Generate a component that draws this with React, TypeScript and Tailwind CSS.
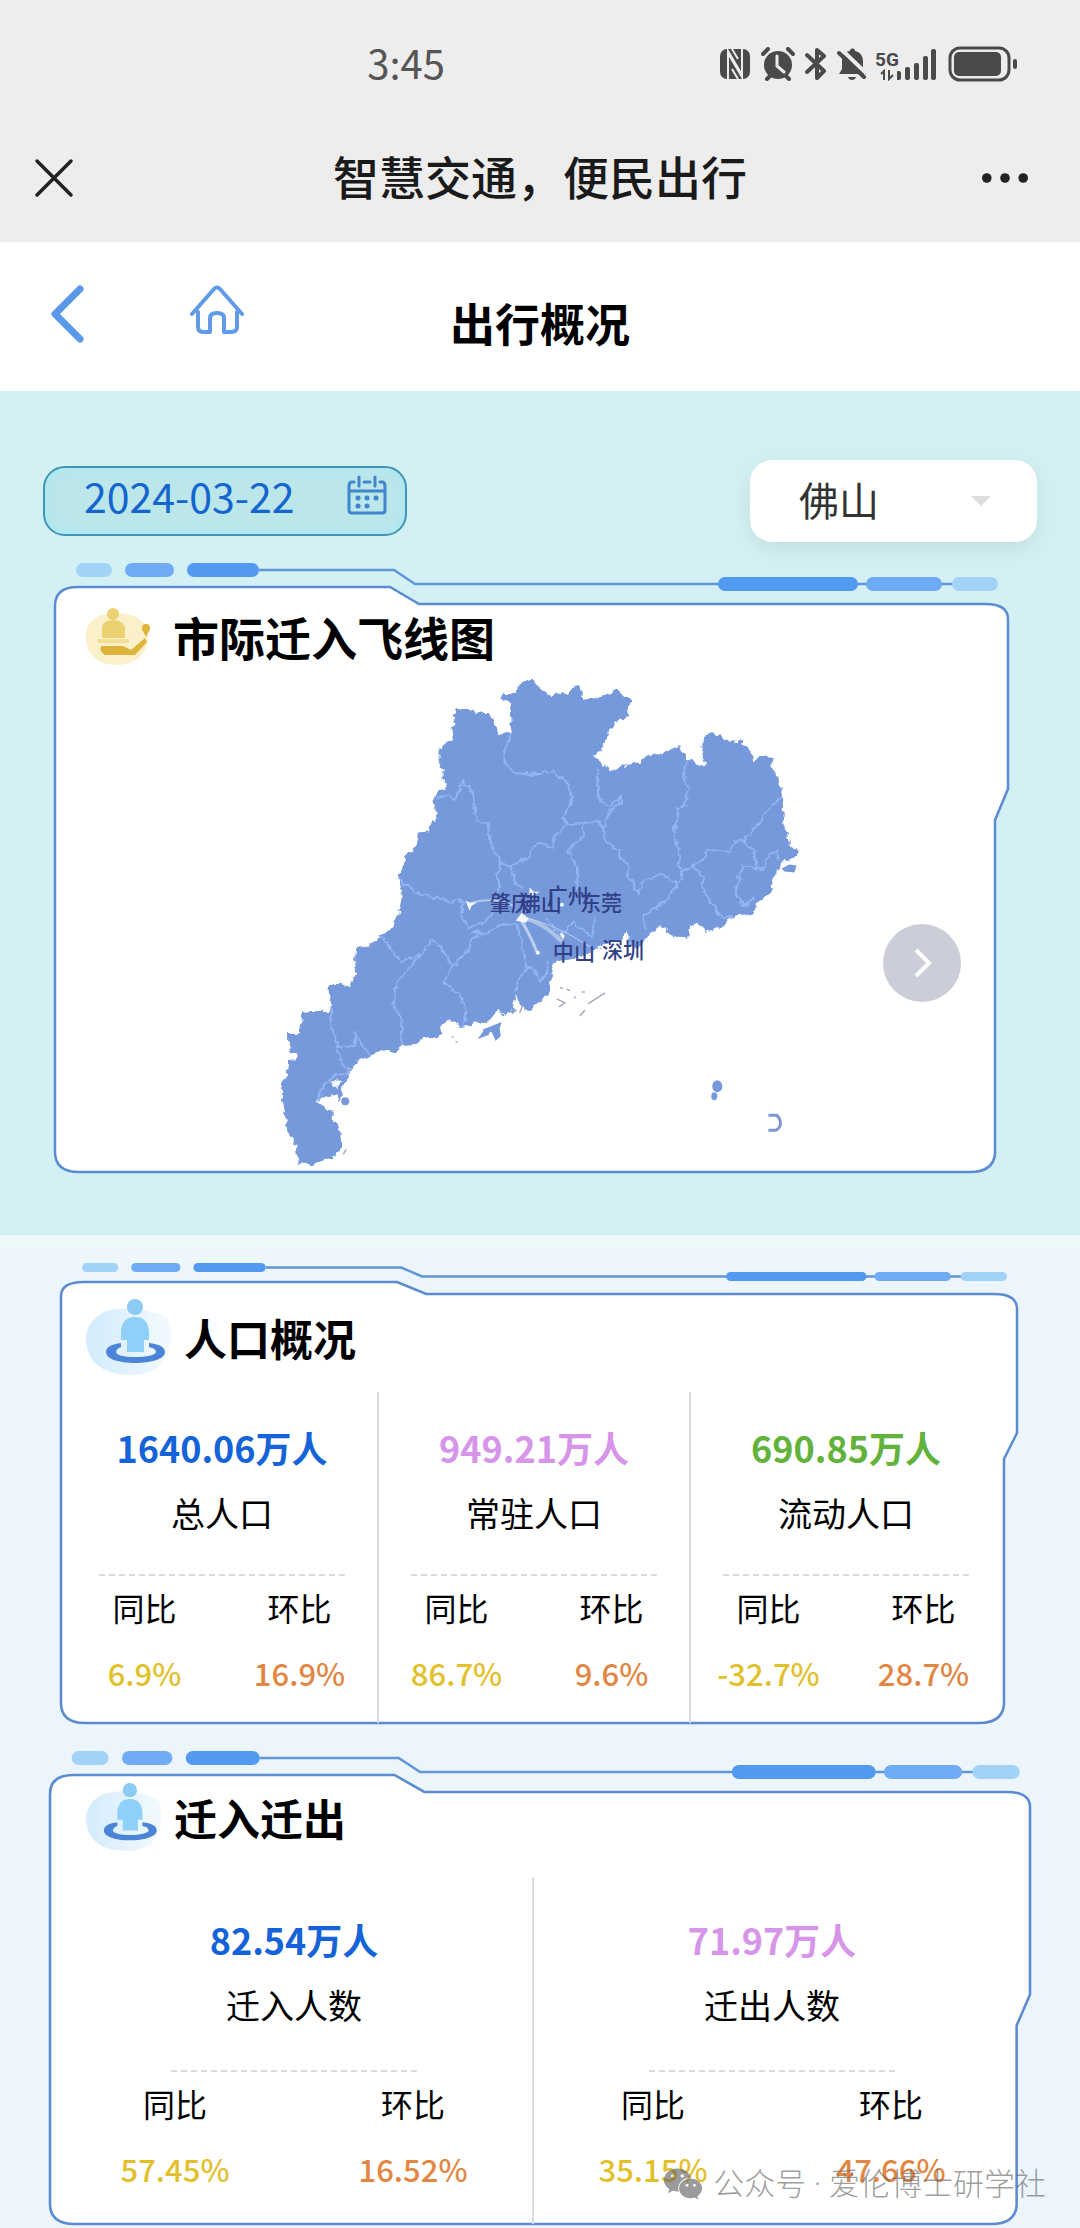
import type { ReactNode } from "react";
import { FaWeixin } from "react-icons/fa";

const population = [
  { value: "1640.06万人", label: "总人口", color: "text-[#1463d8]", yoy: "6.9%", mom: "16.9%" },
  { value: "949.21万人", label: "常驻人口", color: "text-[#d795ea]", yoy: "86.7%", mom: "9.6%" },
  { value: "690.85万人", label: "流动人口", color: "text-[#62b23c]", yoy: "-32.7%", mom: "28.7%" },
];

const migration = [
  { value: "82.54万人", label: "迁入人数", color: "text-[#1463d8]", yoy: "57.45%", mom: "16.52%" },
  { value: "71.97万人", label: "迁出人数", color: "text-[#d795ea]", yoy: "35.15%", mom: "47.66%" },
];

const cityLabels = [
  { name: "肇庆", x: 490, y: 912 },
  { name: "佛山", x: 520, y: 912 },
  { name: "广州", x: 547, y: 905 },
  { name: "东莞", x: 580, y: 912 },
  { name: "中山", x: 553, y: 961 },
  { name: "深圳", x: 602, y: 959 },
];

const province =
  "532,682 522,685 517,693 510,697 503,697 502,702 507,704 511,707 510,717 511,725 511,734 498,737 496,728 492,720 488,715 483,715 473,713 468,711 457,711 454,717 455,725 452,730 453,740 445,747 439,753 439,763 443,770 443,780 446,787 442,792 434,800 436,813 437,822 432,825 429,834 418,835 418,843 413,852 407,854 406,863 401,870 400,880 402,893 402,907 398,917 393,927 387,935 378,936 380,940 367,947 357,950 356,958 355,967 358,976 352,982 350,988 342,985 329,985 330,997 333,1008 330,1012 313,1012 303,1015 302,1027 299,1035 289,1035 289,1045 292,1053 298,1054 297,1060 290,1062 289,1072 283,1082 283,1103 286,1117 288,1130 293,1138 297,1147 297,1153 300,1165 303,1163 315,1165 325,1160 335,1157 342,1147 341,1133 338,1123 334,1122 333,1112 325,1107 318,1103 320,1099 328,1096 337,1096 342,1102 343,1087 347,1080 352,1070 357,1062 370,1058 377,1053 392,1052 395,1053 403,1047 417,1046 423,1038 433,1041 443,1035 440,1028 448,1022 457,1023 460,1028 470,1027 475,1022 482,1025 490,1022 493,1015 498,1010 505,1016 512,1015 514,1005 516,995 520,1005 525,1012 530,1013 533,1007 542,1000 550,993 551,978 555,965 560,962 575,960 593,953 603,947 620,940 627,932 631,947 637,950 652,933 662,928 670,933 673,938 688,940 690,927 697,924 705,933 717,930 727,925 733,917 753,915 756,903 765,900 773,892 772,882 778,870 780,863 790,862 798,857 798,853 789,848 787,837 783,827 782,813 784,802 780,790 777,777 771,768 772,758 760,759 753,763 751,753 742,747 743,741 737,744 728,742 722,738 711,735 703,738 701,752 705,767 698,767 693,762 687,762 683,753 677,748 668,752 662,756 652,756 643,760 640,766 632,765 625,768 610,772 602,765 593,757 602,753 605,742 610,732 618,722 628,718 627,712 631,703 623,697 618,691 612,694 603,698 582,703 583,695 579,687 573,688 570,696 562,695 550,697 543,692 537,687";

const cityBorders = [
  "511,734 508,745 503,757 507,767 515,775 530,776 552,773 567,783 573,800 563,820 568,826 598,823 603,830",
  "568,826 555,837 553,849 538,845 527,860 510,868",
  "437,800 450,797 455,801 463,784 473,793 475,810 478,822 488,825 490,843 500,862 510,868 515,883 523,892",
  "502,862 497,877 500,887 498,893",
  "400,882 412,890 420,896 443,900 453,903 463,901 462,917 468,930 487,922 493,913",
  "598,770 598,797 603,806 612,807 620,798 620,805 610,813 603,830 605,842 618,853 627,867 628,878 638,894 645,881 663,875 677,886 668,900 643,918 646,930",
  "686,762 683,773 688,790 685,807 678,810 673,840 678,847 680,870 682,880 677,886",
  "682,875 692,867 703,861 707,852 727,853 740,840 753,852 757,868 762,872 767,857 777,853 779,860",
  "782,798 770,808 750,835 743,842",
  "692,867 703,878 702,890 713,907 722,920 732,918",
  "757,870 742,867 735,893 743,907 755,900",
  "583,826 583,838 568,852 578,870 577,890",
  "547,920 560,938 574,923 592,938 596,918",
  "382,937 393,953 403,962 422,955 432,942 440,947 453,967 470,950 473,940 480,936 473,933 487,935 503,925 518,927 522,947 527,967",
  "422,955 398,982 394,1007 402,1017 403,1047",
  "453,967 445,983 463,1000 467,1017 463,1027",
  "333,1008 331,1020 338,1048 355,1047 357,1035 363,1047 372,1056",
  "338,1048 343,1065 350,1070 348,1075 337,1075 323,1088 318,1103",
  "527,967 518,983 517,993",
  "527,967 533,970 542,982 547,973 548,963",
];

function StatusIcons() {
  return (
    <div className="flex items-center text-[#4a4a4a]">
      <svg className="mr-[11px] h-[34px] w-[30px]" viewBox="0 0 30 34" fill="currentColor" aria-label="NFC">
        <rect x="0" y="2" width="30" height="30" rx="7" />
        <path d="M8 32V4L21 26M22 2V30L9 8" fill="none" stroke="#ededed" strokeWidth="2" />
        <path d="M12 22L18 32M12 2L18 12" stroke="#ededed" strokeWidth="2" />
      </svg>
      <svg className="mr-[10px] h-[34px] w-[34px]" viewBox="0 0 34 34" aria-label="闹钟">
        <circle cx="17" cy="18" r="14" fill="currentColor" />
        <path d="M2 7l5-5M32 7l-5-5M6 32l4-4M28 32l-4-4" stroke="currentColor" strokeWidth="4" strokeLinecap="round" />
        <path d="M16 9v10l7 6" fill="none" stroke="#ededed" strokeWidth="3" strokeLinecap="round" />
      </svg>
      <svg className="mr-[10px] h-[34px] w-[22px]" viewBox="0 0 22 34" fill="none" stroke="currentColor" strokeWidth="4" strokeLinejoin="round" strokeLinecap="round" aria-label="蓝牙">
        <path d="M2 8l17 16-7 7V3l7 6L2 25" />
      </svg>
      <svg className="mr-[10px] h-[34px] w-[30px]" viewBox="0 0 30 34" aria-label="静音">
        <path d="M5 13c0-5 4-9 8-9l0-1c1-2 4-2 5 0v1c5 1 8 5 8 10v8l3 5H2l3-5z" fill="currentColor" />
        <path d="M11 30h8c-1 4-7 4-8 0z" fill="currentColor" />
        <path d="M5 3l24 23" stroke="#ededed" strokeWidth="4" />
        <path d="M2 6l25 24" stroke="currentColor" strokeWidth="4" strokeLinecap="round" />
      </svg>
      <div className="mr-[11px] flex items-end">
        <div className="flex w-[20px] flex-col items-center">
          <span className="font-['Roboto',sans-serif] text-[19px] leading-[19px] font-bold">5G</span>
          <svg className="h-[12px] w-[16px]" viewBox="0 0 16 12" fill="none" stroke="currentColor" strokeWidth="2">
            <path d="M2 5l3-3v9M10 1v9l4-4" />
          </svg>
        </div>
        <svg className="h-[34px] w-[40px]" viewBox="0 0 40 34" fill="currentColor" aria-label="信号">
          <rect x="-1" y="24" width="5" height="9" rx="2" />
          <rect x="8" y="20" width="5" height="13" rx="2" />
          <rect x="17" y="16" width="5" height="17" rx="2" />
          <rect x="26" y="9" width="5" height="24" rx="2" />
          <rect x="34" y="2" width="5" height="31" rx="2" />
        </svg>
      </div>
      <svg className="h-[36px] w-[70px]" viewBox="0 0 70 36" aria-label="电量">
        <rect x="2" y="2" width="59" height="32" rx="10" fill="none" stroke="currentColor" strokeWidth="3" />
        <rect x="6" y="6" width="47" height="24" rx="5" fill="currentColor" />
        <rect x="65" y="13" width="4" height="10" rx="2" fill="currentColor" />
      </svg>
    </div>
  );
}

// Decorative outline behind each card. `step` is the height of the notch in the
// top edge, `notch` the height at which the right edge turns inwards.
function Frame({ height, step, notch }: { height: number; step: number; notch: number }) {
  const pill = step - 3;
  const top = step + 7;
  const low = top + step;
  const mid = pill / 2;
  return (
    <svg
      className="absolute inset-0 h-full w-full overflow-visible"
      viewBox={`0 0 953 ${height}`}
      preserveAspectRatio="none"
      aria-hidden="true"
    >
      <path
        d={`M0 ${top + step + 2}Q0 ${top} 23 ${top}H335L364 ${low}H930Q953 ${low} 953 ${low + 15}V${notch}L940 ${notch + step + 14}V${height - 18}Q938 ${height} 915 ${height}H24Q0 ${height} 0 ${height - 20}Z`}
        fill="#fff"
        stroke="#5b8bd0"
        strokeWidth="2.500"
      />
      <path d={`M204 ${mid}H339L360 ${mid + pill}H900`} fill="none" stroke="#5f97d8" strokeWidth="2.500" />
      <g fill="#a2d3f7">
        <rect x="21" width="36" height={pill} rx={mid} />
        <rect x="897" y={pill} width="46" height={pill} rx={mid} />
      </g>
      <g fill="#70abf5">
        <rect x="70" width="49" height={pill} rx={mid} />
        <rect x="811" y={pill} width="76" height={pill} rx={mid} />
      </g>
      <g fill="#5299f2">
        <rect x="132" width="72" height={pill} rx={mid} />
        <rect x="663" y={pill} width="140" height={pill} rx={mid} />
      </g>
    </svg>
  );
}

function PersonIcon({ className }: { className: string }) {
  return (
    <svg className={className} viewBox="0 0 86 76" aria-hidden="true">
      <defs>
        <linearGradient id="blob" x1="0" x2="1">
          <stop offset="0" stopColor="#d3ebfb" />
          <stop offset="1" stopColor="#f3faff" />
        </linearGradient>
      </defs>
      <path d="M0 42C0 24 12 12 30 10C50 8 62 12 74 15C84 18 86 30 84 45C82 66 66 76 46 76C20 76 2 66 0 42Z" fill="url(#blob)" />
      <path
        d="M35 44C26 45 20 48 20 53C20 60 33 64 49 64S79 60 79 53C79 48 73 45 63 44V48C68 49 70 51 70 53C70 56 60 58 49 58S30 56 30 53C30 51 32 49 35 48Z"
        fill="#4c84d8"
      />
      <circle cx="49" cy="8" r="8" fill="#8ccbf3" />
      <path d="M35 41V32C36 22 41 18 49 18S62 22 63 32V41H58V53H41V41Z" fill="#8ed0f8" />
    </svg>
  );
}

function FlightIcon() {
  return (
    <svg className="h-[60px] w-[68px]" viewBox="0 0 68 60" aria-hidden="true">
      <path d="M1 32C0 16 12 8 28 7C44 6 62 12 63 28C64 48 50 59 32 59C14 59 2 50 1 32Z" fill="#faf1cb" />
      <circle cx="28" cy="8" r="6" fill="#ecd170" />
      <path d="M17 32V22Q18 14 28 14T40 22V32Z" fill="#ecd170" />
      <path d="M13 33H44V37H13Z" fill="#f3df94" />
      <path d="M16 40H38L46 44L60 32L62 36L50 49H20Q14 46 16 40Z" fill="#dfb43b" />
      <circle cx="61" cy="22" r="4" fill="#e0b238" />
      <path d="M57 23H65L61 31Z" fill="#e0b238" />
    </svg>
  );
}

function FlowMap() {
  return (
    <svg className="mx-auto block w-[60%]" viewBox="260 672 560 496" role="img" aria-label="市际迁入飞线图">
      <defs>
        <filter id="coast" x="-5%" y="-5%" width="110%" height="110%">
          <feTurbulence type="fractalNoise" baseFrequency="0.16" numOctaves="2" seed="4" result="noise" />
          <feDisplacementMap in="SourceGraphic" in2="noise" scale="7" xChannelSelector="R" yChannelSelector="G" />
        </filter>
      </defs>
      <g filter="url(#coast)">
        <polygon points={province} fill="#7699db" />
        {cityBorders.map((points) => (
          <polyline key={points} points={points} fill="none" stroke="#93b5f3" strokeWidth="2" />
        ))}
        <path d="M331 1083l7-3 4 3-4 5z" fill="#f4f8ff" />
      </g>
      <g fill="#7699db">
        <circle cx="346" cy="1102" r="4" />
        <path d="M478 1040l8-11 6-1-3 8zM482 1031l20-8-2 6 1 8-5 5-4-9z" />
        <path d="M781 870l8-4 7 1-2 7-10-1z" />
        <ellipse cx="717" cy="1087" rx="5" ry="6" />
        <ellipse cx="714" cy="1097" rx="3" ry="4" />
      </g>
      <path d="M768 1116h8q4 3 4 8t-5 7h-7" fill="none" stroke="#7c97d4" strokeWidth="3" />
      <path
        d="M588 1005l17-11M580 1017l5-6M560 989h3M567 990l3 2M582 993h3M557 1000l8 4-6 4M574 998l2 1M513 1014l4-3M523 1006l-3 8M452 1038h2M456 1043h2M344 1155l3-5"
        stroke="#a9a9bd"
        strokeWidth="1.500"
        fill="none"
      />
      {/* flight lines into 佛山 */}
      <g stroke="#cfdcf2" strokeLinecap="round" fill="none">
        <path d="M521 921Q530 935 537 953" strokeWidth="3" opacity="0.8" />
        <path d="M521 919Q542 922 562 943" strokeWidth="4" opacity="0.6" />
        <path d="M472 904Q495 898 513 907" strokeWidth="2" opacity="0.7" />
        <path d="M521 918Q555 925 590 948" strokeWidth="1" opacity="0.7" />
      </g>
      <g fill="#f4f8ff">
        <path d="M466 902l5 2 6 0-5 3-2 5-2-5zM530 889l4 4h6l-5 3-6 1zM516 922l6-8 7 6-3 4zM560 935l3 6 2-4-3-3z" />
        <circle cx="562" cy="906" r="2" />
        <circle cx="538" cy="954" r="2" />
      </g>
      <g className="font-['Noto_Sans_CJK_SC',sans-serif] text-[21px] font-medium" fill="#303f86">
        {cityLabels.map((c) => (
          <text key={c.name} x={c.x} y={c.y}>
            {c.name}
          </text>
        ))}
      </g>
    </svg>
  );
}

function CardTitle({ children }: { children: ReactNode }) {
  return <h2 className="text-[43px] leading-[60px] font-bold text-black">{children}</h2>;
}

type Item = (typeof population)[number];

function Metric({ item, roomy }: { item: Item; roomy?: boolean }) {
  return (
    <div className={`flex-1 text-center leading-[46px] text-black ${roomy ? "pt-[39px] pb-8" : "pt-8 pb-[27px]"}`}>
      <div className={`text-[36px] font-bold ${item.color}`}>{item.value}</div>
      <div className="mt-5 text-[34px]">{item.label}</div>
      <div className={`mx-auto mb-2 w-[246px] border-t-2 border-dashed border-[#d9d9d9] ${roomy ? "mt-[42px]" : "mt-[38px]"}`} />
      <div className="flex text-[32px]">
        <div className="flex-1">
          <div>同比</div>
          <div className="mt-5 text-[31px] font-medium text-[#e2c02b]">{item.yoy}</div>
        </div>
        <div className="flex-1">
          <div>环比</div>
          <div className="mt-5 text-[31px] font-medium text-[#e28743]">{item.mom}</div>
        </div>
      </div>
    </div>
  );
}

export default function App() {
  return (
    <div className="relative bg-[#edf5fc] font-['Noto_Sans_CJK_SC',sans-serif]">
      {/* Phone status bar + webview title */}
      <div className="bg-[#ededed] pb-[14px]">
        <div className="flex h-32 items-center justify-between pr-[62px] pl-[34%]">
          <span className="pb-1 text-[40px] leading-none text-[#555]">3:45</span>
          <StatusIcons />
        </div>
        <div className="flex h-[100px] items-center justify-between px-[34px]">
          <button type="button" aria-label="关闭" className="w-[64px]">
            <svg className="h-10 w-10" viewBox="0 0 40 40" stroke="#222" strokeWidth="3.500" strokeLinecap="round">
              <path d="M3 3l34 34M37 3L3 37" />
            </svg>
          </button>
          <h1 className="pb-[6px] text-[46px] leading-none font-medium text-[#1a1a1a]">智慧交通，便民出行</h1>
          <button type="button" aria-label="更多" className="flex w-[64px] justify-end">
            <svg className="mr-[18px] h-3 w-12" viewBox="0 0 48 12" fill="#222">
              <circle cx="5" cy="6" r="5" />
              <circle cx="24" cy="6" r="5" />
              <circle cx="43" cy="6" r="5" />
            </svg>
          </button>
        </div>
      </div>

      <header className="flex h-[149px] items-start bg-white px-[50px] pt-[43px]">
        <div className="flex flex-1 items-start gap-[106px]">
          <button type="button" aria-label="返回">
            <svg className="h-[58px] w-[34px]" viewBox="0 0 34 58" fill="none" stroke="#5a98ea" strokeWidth="7" strokeLinecap="round" strokeLinejoin="round">
              <path d="M30 4L5 29L30 54" />
            </svg>
          </button>
          <a href="#home" aria-label="首页">
            <svg className="h-[50px] w-[54px]" viewBox="0 0 54 50" fill="none" stroke="#5f9be8" strokeWidth="4" strokeLinecap="round" strokeLinejoin="round">
              <path d="M2 29L24 4Q27 1 30 4L52 29" />
              <path d="M8 27V42Q8 47 13 47H20V33Q20 28 27 28T34 33V47H41Q47 47 47 42V27" />
            </svg>
          </a>
        </div>
        <h2 className="pt-2 text-[45px] leading-[60px] font-bold text-black">出行概况</h2>
        <div className="flex-1" />
      </header>

      <section className="bg-[#d3f1f5] pt-[69px] pb-[63px]">
        <div className="flex items-center justify-between px-[43px]">
          <div className="flex h-[70px] w-[364px] items-center rounded-[22px] border-2 border-[#4095b5] bg-[#bbe6ea] pr-[18px] pb-3 pl-[39px] shadow-[inset_0_0_12px_#a5e8f8]">
            <input
              type="text"
              aria-label="日期"
              defaultValue="2024-03-22"
              className="w-full min-w-0 bg-transparent text-[41px] leading-[56px] text-[#1565cf] outline-none"
            />
            <svg className="h-10 w-10 shrink-0" viewBox="0 0 40 40" fill="none" stroke="#3f86cf" strokeWidth="3" strokeLinecap="round">
              <path d="M7 7H5Q2 7 2 11V35Q2 38 5 38H35Q38 38 38 35V11Q38 7 35 7H33M17 7H23M2 16H38M12 2V11M28 2V11" />
              <path d="M11 23h.1M20 23h.1M29 23h.1M11 31h.1M20 31h.1" strokeWidth="5" />
            </svg>
          </div>
          <div className="relative">
            <select
              aria-label="城市"
              defaultValue="佛山"
              className="h-[82px] w-[287px] appearance-none rounded-[22px] bg-white pb-1 pl-[49px] text-[40px] text-[#333] shadow-[0_6px_20px_rgba(120,130,120,0.18)] outline-none"
            >
              <option>佛山</option>
              <option>广州</option>
              <option>深圳</option>
            </select>
            <span className="pointer-events-none absolute top-9 right-[46px] border-x-10 border-t-10 border-x-transparent border-t-[#dedede]" />
          </div>
        </div>

        <div className="relative mt-[21px] mr-[72px] ml-[55px] h-[609px]">
          <Frame height={609} step={17} notch={226} />
          <div className="relative pt-[43px]">
            <div className="flex items-center gap-5 pl-[30px]">
              <FlightIcon />
              <h2 className="text-[46px] leading-[60px] font-bold text-black">市际迁入飞线图</h2>
            </div>
            <div className="pt-1 pl-[17px]">
              <FlowMap />
            </div>
            <button
              type="button"
              aria-label="下一页"
              className="absolute top-[361px] right-[47px] flex h-[78px] w-[78px] items-center justify-center rounded-full bg-[#cbcdd8]"
            >
              <svg className="h-8 w-5" viewBox="0 0 20 32" fill="none" stroke="#fff" strokeWidth="4">
                <path d="M4 3L17 16L4 29" />
              </svg>
            </button>
          </div>
        </div>
      </section>

      <main className="bg-[linear-gradient(#eef9fa,#edf5fc_40px)] pt-7 pb-1">
        <section className="relative mr-[63px] ml-[61px]">
          <Frame height={460} step={12} notch={170} />
          <div className="relative pt-9">
            <div className="flex items-center gap-3 pl-[25px]">
              <PersonIcon className="h-[76px] w-[86px]" />
              <CardTitle>人口概况</CardTitle>
            </div>
            <div className="mt-[17px] mr-[16px] ml-[6px] flex divide-x-2 divide-[#dcdde0]">
              {population.map((p) => (
                <Metric key={p.label} item={p} />
              ))}
            </div>
          </div>
        </section>

        <section className="relative mx-[50px] mt-7">
          <Frame height={474} step={17} notch={244} />
          <div className="relative pt-8">
            <div className="flex items-center gap-[11px] pl-9">
              <PersonIcon className="h-[68px] w-[77px]" />
              <CardTitle>迁入迁出</CardTitle>
            </div>
            <div className="mt-[26px] mr-[20px] ml-[6px] flex divide-x-2 divide-[#dcdde0]">
              {migration.map((m) => (
                <Metric key={m.label} item={m} roomy />
              ))}
            </div>
          </div>
        </section>
      </main>

      <div className="pointer-events-none absolute right-[34px] bottom-5 flex items-center gap-[10px] text-[31px] leading-[46px] font-light text-[#666]/65">
        <FaWeixin className="h-10 w-10" />
        <span>
          公众号<span className="font-['Roboto',sans-serif]"> · </span>爱伦博士研学社
        </span>
      </div>
    </div>
  );
}
